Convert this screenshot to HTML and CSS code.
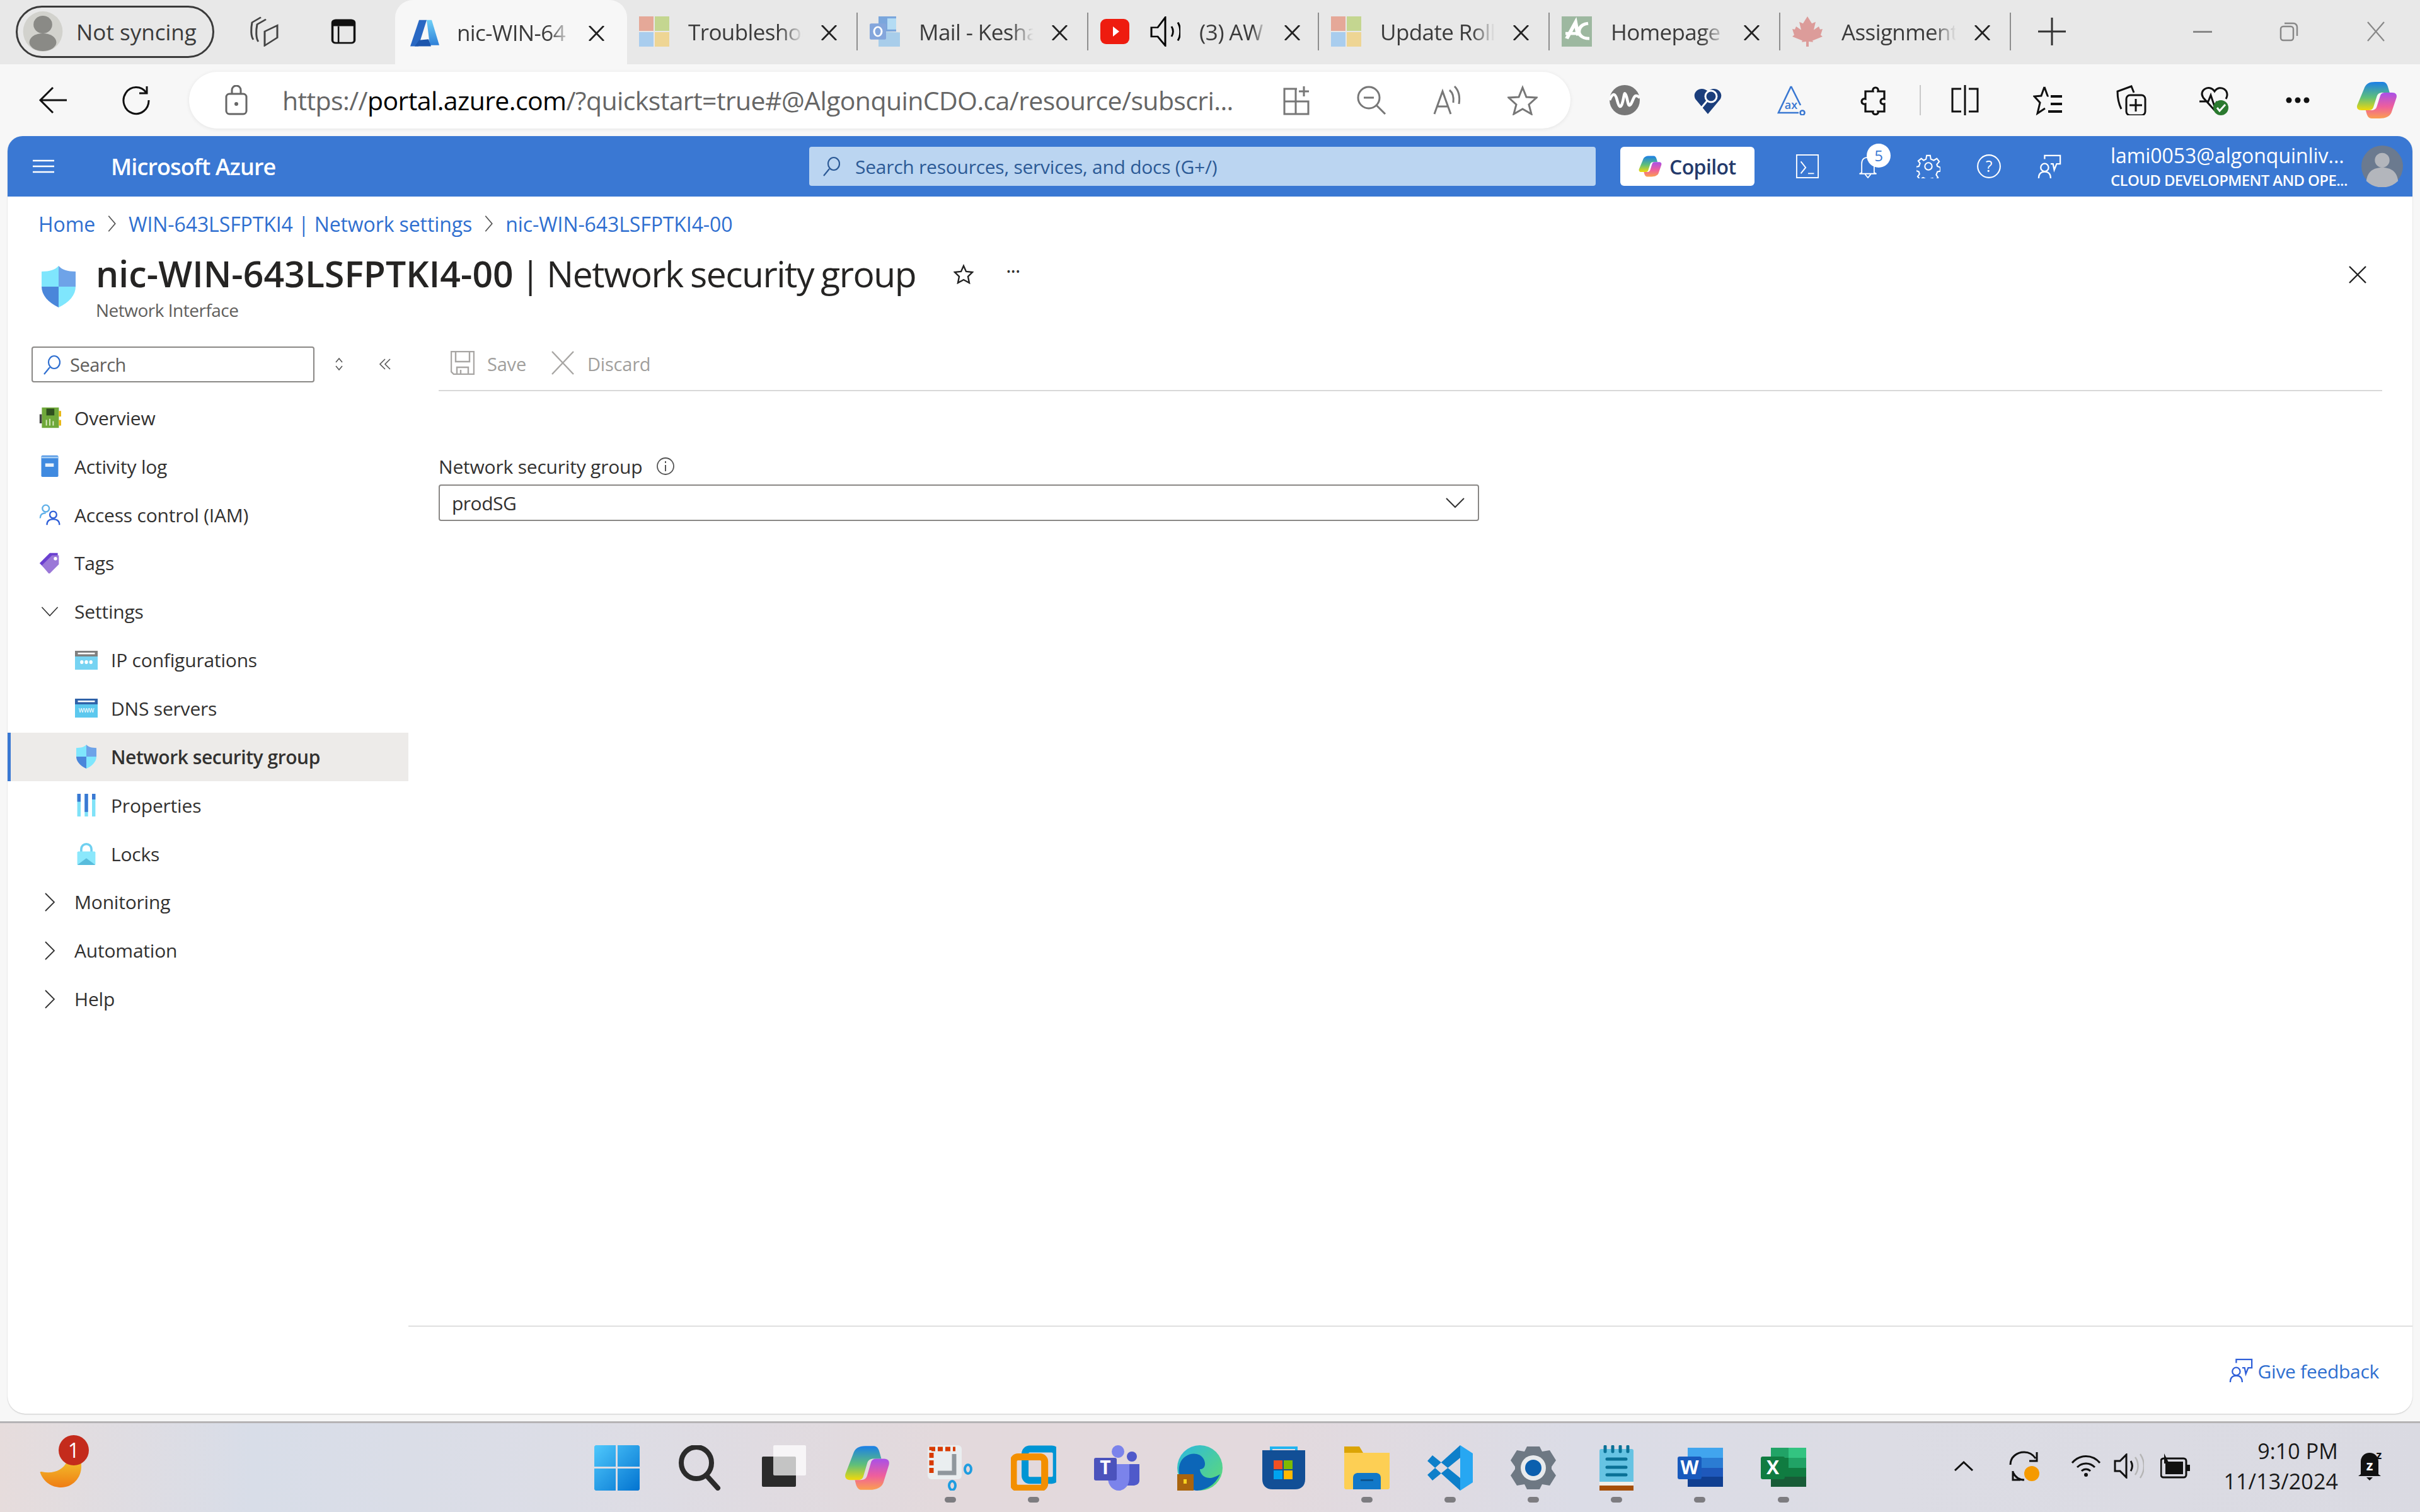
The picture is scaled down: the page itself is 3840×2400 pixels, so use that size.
FILE: index.html
```html
<!DOCTYPE html>
<html lang="en">
<head>
  <meta charset="UTF-8">
  <meta name="viewport" content="width=device-width, initial-scale=1.0">
  <title>nic-WIN-643LSFPTKI4-00 | Network security group</title>
  <link rel="stylesheet" href="styles.css">
</head>
<body>
  <svg class="defs" width="0" height="0">
    <defs>
      <linearGradient id="gLeft" x1="0" y1="0" x2="0" y2="1"><stop offset="0" stop-color="#1b7fe8"/><stop offset=".55" stop-color="#5fbf7a"/><stop offset="1" stop-color="#f2d90a"/></linearGradient>
      <linearGradient id="gRight" x1="0" y1="0" x2="0" y2="1"><stop offset="0" stop-color="#a850e8"/><stop offset=".55" stop-color="#ef5f9c"/><stop offset="1" stop-color="#fb9f50"/></linearGradient>
      <linearGradient id="gAzure" x1="0" y1="0" x2="0" y2="1"><stop offset="0" stop-color="#6fd0f7"/><stop offset="1" stop-color="#2f80d8"/></linearGradient>
      <linearGradient id="gStart" x1="0" y1="0" x2="1" y2="1"><stop offset="0" stop-color="#4fc8fc"/><stop offset="1" stop-color="#0273d0"/></linearGradient>
      <linearGradient id="gEdge" x1="0" y1="0" x2="1" y2="1"><stop offset="0" stop-color="#2bb8e0"/><stop offset="1" stop-color="#62dc70"/></linearGradient>
      <linearGradient id="gMoon" x1="0" y1="0" x2="0" y2="1"><stop offset="0" stop-color="#f2bb2a"/><stop offset="1" stop-color="#ef7d14"/></linearGradient>
      <symbol id="copilot" viewBox="0 0 48 60" preserveAspectRatio="none">
        <path fill="url(#gLeft)" d="M22 1h9c3 0 5 3 6 8l2 9h-8c-4 0-6 2-7 6l-4 17c-1 4-3 5-6 5H6c-4 0-6-3-5-8L9 12C11 4 15 1 22 1z"/>
        <path fill="url(#gRight)" d="M27 59h-9c-3 0-5-3-6-8l-1-5h6c4 0 6-2 7-6l4-17c1-4 3-5 6-5h8c4 0 6 3 5 8l-6 24c-2 6-7 9-14 9z"/>
      </symbol>
      <symbol id="msfav" viewBox="0 0 48 48">
        <rect width="23" height="23" fill="#e5a898"/><rect x="25" width="23" height="23" fill="#c4d690"/>
        <rect y="25" width="23" height="23" fill="#a9cdee"/><rect x="25" y="25" width="23" height="23" fill="#eed594"/>
      </symbol>
      <symbol id="shield" viewBox="0 0 54 66" preserveAspectRatio="none">
        <path fill="#6ea3e8" d="M27 0c5 6 14 9 27 9v24H27z"/><path fill="#7fe6fd" d="M27 0C22 6 13 9 0 9v24h27z"/>
        <path fill="#4a86da" d="M0 33h27v33C10 58 0 46 0 33z"/><path fill="#7fe6fd" d="M54 33H27v33c17-8 27-20 27-33z"/>
      </symbol>
      <symbol id="feedback" viewBox="0 0 40 40">
        <g fill="none" stroke="currentColor" stroke-width="2.4"><path d="M12 8V2h26v14h-6l-4 10-2-10h-4"/><circle cx="12" cy="22" r="6.5"/><path d="M2 40c0-8 4-11 10-11s10 3 10 11"/></g>
      </symbol>
      <symbol id="chev" viewBox="0 0 16 32"><path fill="none" stroke="currentColor" stroke-width="2" d="M2 2l12 14L2 30"/></symbol>
      <symbol id="tabx" viewBox="0 0 25 24"><path stroke="#222" stroke-width="2.8" d="M1 0l23 24M24 0L1 24"/></symbol>
    </defs>
  </svg>

  <div class="tabstrip">
    <div class="profile">
      <svg class="profile-pic" viewBox="0 0 40 66" preserveAspectRatio="none"><ellipse cx="20" cy="33" rx="19" ry="32" fill="#d2d2cd"/><ellipse cx="20" cy="22" rx="9" ry="14" fill="#8a8a86"/><ellipse cx="20" cy="50" rx="13" ry="14" fill="#8a8a86"/></svg>
      <span>Not syncing</span>
    </div>
    <svg class="strip-btn" viewBox="0 0 48 60" preserveAspectRatio="none"><g fill="none" stroke="#444" stroke-width="3"><path d="M6 46C2 40 2 24 4 12L18 2"/><path d="M14 50C10 44 10 28 12 16L26 6"/><path d="M24 58l20-16V18L24 30z"/></g></svg>
    <svg class="strip-btn vertical" viewBox="0 0 48 60" preserveAspectRatio="none"><rect x="4" y="4" width="40" height="52" rx="6" fill="none" stroke="#111" stroke-width="4"/><path fill="#111" d="M4 10a6 6 0 0 1 6-6h28a6 6 0 0 1 6 6v8H4z"/><path stroke="#111" stroke-width="3" d="M15 18v38"/></svg>

    <div class="tab active">
      <svg class="fav" viewBox="0 0 48 60" preserveAspectRatio="none"><path fill="#2968c3" d="M15 6h12L14 58H1z"/><path fill="url(#gAzure)" d="M27 6h8l12 50H32z"/><path fill="#1d56ad" d="M15 46l15-2 4 14H8z"/></svg>
      <span class="tab-title">nic-WIN-64</span><svg class="tab-x"><use href="#tabx"/></svg>
    </div>
    <div class="tab">
      <svg class="fav"><use href="#msfav"/></svg>
      <span class="tab-title">Troubleshoo</span><svg class="tab-x"><use href="#tabx"/></svg>
    </div>
    <div class="tab">
      <svg class="fav" viewBox="0 0 48 60" preserveAspectRatio="none"><path fill="#7aa6dc" d="M14 0h28v30H14z"/><path fill="#b4dcf4" d="M28 4h14v22H28z"/><path fill="#a8cdea" d="M14 30l34 2v28H14z"/><rect y="14" width="26" height="32" rx="3" fill="#84a6dc"/><ellipse cx="13" cy="30" rx="6" ry="9" fill="none" stroke="#fff" stroke-width="3"/></svg>
      <span class="tab-title">Mail - Kesha</span><svg class="tab-x"><use href="#tabx"/></svg>
    </div>
    <div class="tab">
      <svg class="fav" viewBox="0 0 48 48"><rect y="4" width="46" height="40" rx="9" fill="#ee1c0f"/><path fill="#fff" d="M20 16l10 8-10 8z"/></svg>
      <svg class="fav spk" viewBox="0 0 48 60" preserveAspectRatio="none"><g fill="none" stroke="#000" stroke-width="3"><path d="M2 22h10L24 2v56L12 40H2z"/><path d="M34 20c3 6 3 14 0 20"/><path d="M44 12c5 10 5 26 0 36"/></g></svg>
      <span class="tab-title short">(3) AW</span><svg class="tab-x"><use href="#tabx"/></svg>
    </div>
    <div class="tab">
      <svg class="fav"><use href="#msfav"/></svg>
      <span class="tab-title">Update Roll</span><svg class="tab-x"><use href="#tabx"/></svg>
    </div>
    <div class="tab">
      <svg class="fav" viewBox="0 0 48 60" preserveAspectRatio="none"><rect width="48" height="60" fill="#9db8a0"/><path fill="none" stroke="#fff" stroke-width="6" d="M8 44L22 12l4 26M42 14C28 16 24 30 30 38c3 4 8 6 14 6M6 34h22"/></svg>
      <span class="tab-title">Homepage</span><svg class="tab-x"><use href="#tabx"/></svg>
    </div>
    <div class="tab">
      <svg class="fav" viewBox="0 0 48 60" preserveAspectRatio="none"><path fill="#dc9c9a" d="M24 0l7 14 6-3-3 16 8-7 2 6 4-1-3 12 3 3-16 8 1 3-7-1v10h-4V50l-7 1 1-3L0 40l3-3-3-12 4 1 2-6 8 7-3-16 6 3z"/></svg>
      <span class="tab-title">Assignment</span><svg class="tab-x"><use href="#tabx"/></svg>
    </div>
    <svg class="newtab" viewBox="0 0 44 44"><path stroke="#333" stroke-width="3" d="M22 0v44M0 22h44"/></svg>
    <div class="winctl">
      <span class="win-min"></span>
      <svg class="win-res" viewBox="0 0 30 32"><g fill="none" stroke="#888" stroke-width="2.5"><rect x="2" y="8" width="20" height="22" rx="4"/><path d="M8 3h14a6 6 0 0 1 6 6v14"/></g></svg>
      <svg class="win-close" viewBox="0 0 30 32"><path stroke="#888" stroke-width="2.2" d="M2 1l26 30M28 1L2 31"/></svg>
    </div>
  </div>

  <div class="toolbar">
    <span class="tool-cell"><svg class="ico" viewBox="0 0 48 48"><path fill="none" stroke="#111" stroke-width="3" d="M24 4L4 24l20 20M4 24h42"/></svg></span>
    <span class="tool-cell"><svg class="ico" viewBox="0 0 48 48"><path fill="none" stroke="#111" stroke-width="3" d="M40 12A20 21 0 1 0 44 24M41 2v11H29"/></svg></span>
    <div class="addressbar">
      <svg class="lock" viewBox="0 0 36 48"><g fill="none" stroke="#666" stroke-width="3"><rect x="2" y="14" width="32" height="32" rx="5"/><path d="M11 14V8a7 7 0 0 1 14 0v6"/></g><circle cx="18" cy="30" r="3" fill="#666"/></svg>
      <span class="url">https://<b>portal.azure.com</b>/?quickstart=true#@AlgonquinCDO.ca/resource/subscri...</span>
      <span class="addr-btns">
        <svg class="ico" viewBox="0 0 48 48"><g fill="none" stroke="#777" stroke-width="3"><path d="M26 6H6v40h38V26H6M24 6v40"/><path d="M37 2v16M29 10h16"/></g></svg>
        <svg class="ico" viewBox="0 0 48 48"><g fill="none" stroke="#777" stroke-width="3"><circle cx="20" cy="20" r="17"/><path d="M32 32l14 14M12 20h16"/></g></svg>
        <svg class="ico" viewBox="0 0 48 48"><g fill="none" stroke="#777" stroke-width="3"><path d="M4 46L17 10l13 36M9 34h16"/><path d="M28 8c5 4 7 12 6 20M36 2c6 6 9 16 7 28"/></g></svg>
        <svg class="ico" viewBox="0 0 48 48"><path fill="none" stroke="#777" stroke-width="3" d="M24 4l6 15 16 1-12 11 4 15-14-8-14 8 4-15L2 20l16-1z"/></svg>
      </span>
    </div>
    <div class="ext-btns">
      <span class="tool-cell"><svg class="ico" viewBox="0 0 48 48"><circle cx="24" cy="24" r="24" fill="#777"/><path fill="none" stroke="#fff" stroke-width="4.5" d="M0 24c5-12 9-12 12 0s6 14 9 2 2-16 5-10 3 22 8 14 4-18 14-10"/></svg></span>
      <span class="tool-cell"><svg class="ico" viewBox="0 0 48 48"><path fill="#1b3e7c" d="M24 46L4 22C-2 10 14 0 24 10c10-10 26 0 20 12z"/><circle cx="29" cy="18" r="9" fill="none" stroke="#fff" stroke-width="3"/><path stroke="#fff" stroke-width="3" d="M23 25L13 37"/></svg></span>
      <span class="tool-cell"><svg class="ico" viewBox="0 0 48 48"><g fill="none" stroke="#3a78d2" stroke-width="2.6"><path d="M24 2L4 44h32M24 2l15 30"/><circle cx="42" cy="44" r="3.5"/></g><text class="ax" x="24" y="38">ax</text></svg></span>
      <span class="tool-cell"><svg class="ico" viewBox="0 0 48 48"><path fill="none" stroke="#111" stroke-width="3.2" d="M16 10h6c-2-8 10-8 8 0h10v12c-8-2-8 10 0 8v12H30c2 6-10 6-8 0H10V30c-8 2-8-10 0-8V10z"/></svg></span>
      <span class="tool-div"></span>
      <span class="tool-cell"><svg class="ico" viewBox="0 0 48 48"><g fill="none" stroke="#111" stroke-width="3"><path d="M18 6H4v36h14M30 6h14v36H30M24 0v48"/></g></svg></span>
      <span class="tool-cell"><svg class="ico" viewBox="0 0 48 48"><g fill="none" stroke="#111" stroke-width="3"><path d="M18 3l5 14h-1M18 3l-5 14-11 1 9 10-4 17 12-8"/></g><path stroke="#111" stroke-width="4" d="M28 18h18M28 30h18M24 42h22" /></svg></span>
      <span class="tool-cell"><svg class="ico" viewBox="0 0 48 48"><g fill="none" stroke="#111" stroke-width="3"><path d="M8 38C4 30 2 20 2 10l22-8 4 10"/><rect x="16" y="16" width="30" height="32" rx="6"/><path d="M31 22v20M21 32h20"/></g></svg></span>
      <span class="tool-cell"><svg class="ico" viewBox="0 0 48 48"><path fill="none" stroke="#111" stroke-width="3" d="M24 40L6 20C-2 8 16-2 24 10c8-12 26-2 18 12M0 26h14l4-10 6 18 4-8"/><circle cx="34" cy="36" r="12" fill="#2b7a2f"/><path fill="none" stroke="#fff" stroke-width="3" d="M28 36l4 5 9-10"/></svg></span>
      <span class="tool-cell"><svg class="more-ico" viewBox="0 0 38 10"><circle cx="5" cy="5" r="4.5" fill="#111"/><circle cx="19" cy="5" r="4.5" fill="#111"/><circle cx="33" cy="5" r="4.5" fill="#111"/></svg></span>
      <span class="tool-cell copilot-cell"><svg class="copilot-big"><use href="#copilot"/></svg></span>
    </div>
  </div>

  <div class="portal-wrap">
    <div class="portal">
      <header class="topbar">
        <span class="menu-cell"><svg class="hamburger" viewBox="0 0 34 22"><path stroke="#fff" stroke-width="2.4" d="M0 2h34M0 11h34M0 20h34"/></svg></span>
        <span class="brand">Microsoft Azure</span>
        <div class="globalsearch">
          <svg class="mag" viewBox="0 0 28 32"><g fill="none" stroke="#2c5a96" stroke-width="2.2"><ellipse cx="18" cy="12" rx="9" ry="10"/><path d="M11 20L2 31"/></g></svg>
          <span>Search resources, services, and docs (G+/)</span>
        </div>
        <div class="copilot-btn"><svg class="copilot-sm"><use href="#copilot"/></svg><span>Copilot</span></div>
        <div class="top-icons">
          <span class="top-cell"><svg class="top-ico" viewBox="0 0 38 40"><rect x="1" y="1" width="36" height="38" fill="none" stroke="#fff" stroke-width="2"/><path fill="none" stroke="#fff" stroke-width="2" d="M8 12l8 10-8 10M20 32h10"/></svg></span>
          <span class="top-cell bell">
            <svg class="top-ico" viewBox="0 0 38 40"><path fill="none" stroke="#fff" stroke-width="2" d="M8 30V14C8 7 12 3 19 3s11 4 11 11v16l4 2H4zM14 33l5 6 5-6"/></svg>
            <span class="badge">5</span>
          </span>
          <span class="top-cell"><svg class="top-ico" viewBox="0 0 40 40"><g fill="none" stroke="#fff" stroke-width="2.2"><circle cx="20" cy="20" r="6"/><path d="M17 2h6l1 6 5 2 5-3 4 5-4 5 1 3 5 2v6l-5 1-2 5 3 5-5 4-4-3-4 1-1 5h-6l-1-5-4-2-5 3-4-5 3-4-1-4-5-2v-6l5-1 2-5-3-4 5-4 4 3 4-2z"/></g></svg></span>
          <span class="top-cell"><svg class="top-ico" viewBox="0 0 40 40"><circle cx="20" cy="20" r="18.8" fill="none" stroke="#fff" stroke-width="2.2"/><text class="q" x="20" y="29">?</text></svg></span>
          <span class="top-cell"><svg class="top-ico white"><use href="#feedback"/></svg></span>
        </div>
        <div class="user">
          <span class="user-mail">lami0053@algonquinliv...</span>
          <span class="user-org">CLOUD DEVELOPMENT AND OPE...</span>
        </div>
        <svg class="avatar" viewBox="0 0 68 68"><circle cx="34" cy="34" r="34" fill="#6b7a8f"/><circle cx="34" cy="24" r="12" fill="#b3b6bc"/><path fill="#b3b6bc" d="M8 58c2-16 12-22 26-22s24 6 26 22c-14 14-38 14-52 0z"/></svg>
      </header>

      <nav class="crumbs">
        <a>Home</a><svg class="crumb-sep"><use href="#chev"/></svg>
        <a>WIN-643LSFPTKI4 | Network settings</a><svg class="crumb-sep"><use href="#chev"/></svg>
        <a>nic-WIN-643LSFPTKI4-00</a>
      </nav>

      <div class="blade-head">
        <svg class="blade-shield"><use href="#shield"/></svg>
        <div class="blade-titles">
          <h1><b>nic-WIN-643LSFPTKI4-00</b> | Network security group</h1>
          <p>Network Interface</p>
        </div>
        <svg class="pin" viewBox="0 0 32 32"><path fill="none" stroke="#222" stroke-width="2.4" d="M16 3l4 9 10 1-7 7 2 10-9-5-9 5 2-10-7-7 10-1z"/></svg>
        <span class="more">···</span>
        <svg class="blade-close" viewBox="0 0 30 30"><path stroke="#222" stroke-width="2.4" d="M2 2l26 26M28 2L2 28"/></svg>
      </div>

      <div class="blade-body">
        <aside class="sidebar">
          <div class="side-tools">
            <div class="side-search">
              <svg class="mag" viewBox="0 0 28 32"><g fill="none" stroke="#2f6fd0" stroke-width="2.2"><ellipse cx="18" cy="12" rx="9" ry="10"/><path d="M11 20L2 31"/></g></svg>
              <span>Search</span>
            </div>
            <svg class="sort-ico" viewBox="0 0 16 20"><path fill="none" stroke="#555" stroke-width="1.6" d="M3 7l5-6 5 6M3 13l5 6 5-6"/></svg>
            <svg class="collapse-ico" viewBox="0 0 20 20"><path fill="none" stroke="#555" stroke-width="1.6" d="M10 2l-8 8 8 8M18 2l-8 8 8 8"/></svg>
          </div>
          <ul class="side-list">
            <li class="side-row">
              <svg class="side-ico" viewBox="0 0 40 40"><rect x="6" y="2" width="30" height="36" fill="#6fa83a"/><rect x="14" y="4" width="14" height="12" fill="#2f4f1f"/><rect x="36" y="8" width="4" height="10" fill="#e8b818"/><rect x="36" y="24" width="4" height="10" fill="#e8b818"/><rect x="2" y="14" width="4" height="16" fill="#444"/><path stroke="#dfeec8" stroke-width="2" d="M14 24v10M20 22v12M26 26v8"/></svg>
              <span>Overview</span>
            </li>
            <li class="side-row">
              <svg class="side-ico" viewBox="0 0 40 40"><rect x="5" y="1" width="30" height="38" rx="2" fill="#3f8ae0"/><path fill="#a9d0f5" d="M5 3h30v3H5z"/><rect x="12" y="15" width="15" height="6" fill="#e8f2fc"/></svg>
              <span>Activity log</span>
            </li>
            <li class="side-row">
              <svg class="side-ico" viewBox="0 0 40 40"><g fill="none" stroke-width="2.6"><circle cx="13" cy="9" r="6" stroke="#5fb0e8"/><path d="M3 26c0-6 4-9 10-9" stroke="#5fb0e8"/><circle cx="26" cy="20" r="6" stroke="#2f5fd8"/><path d="M15 38c0-7 4-10 11-10s11 3 11 10" stroke="#2f5fd8"/></g></svg>
              <span>Access control (IAM)</span>
            </li>
            <li class="side-row">
              <svg class="side-ico" viewBox="0 0 40 40"><path fill="#6a3fd0" d="M2 20L20 2h14v8L12 30z"/><path fill="#9b78d8" d="M6 24L24 6h12v16L20 38h-2z"/><circle cx="30" cy="12" r="3" fill="#fff"/></svg>
              <span>Tags</span>
            </li>
            <li class="side-row">
              <svg class="side-chev open" viewBox="0 0 32 20"><path fill="none" stroke="#333" stroke-width="1.8" d="M2 2l14 15L30 2"/></svg>
              <span>Settings</span>
            </li>
            <li class="side-row sub">
              <svg class="side-ico wide" viewBox="0 0 40 30" preserveAspectRatio="none"><rect width="40" height="30" fill="#76d3f2"/><rect width="40" height="9" fill="#7f7f7f"/><rect x="5" y="3" width="30" height="2.5" fill="#fff"/><circle cx="12" cy="18" r="3" fill="#fff"/><circle cx="20" cy="18" r="3" fill="#fff"/><circle cx="28" cy="18" r="3" fill="#fff"/></svg>
              <span>IP configurations</span>
            </li>
            <li class="side-row sub">
              <svg class="side-ico wide" viewBox="0 0 40 30" preserveAspectRatio="none"><rect width="40" height="30" fill="#5cc8ee"/><rect width="40" height="9" fill="#2f62a8"/><rect x="5" y="3" width="30" height="2.5" fill="#fff"/><text class="www" x="20" y="22">www</text></svg>
              <span>DNS servers</span>
            </li>
            <li class="side-row sub current">
              <svg class="side-ico shield-sm"><use href="#shield"/></svg>
              <span>Network security group</span>
            </li>
            <li class="side-row sub">
              <svg class="side-ico" viewBox="0 0 40 40"><rect x="4" y="0" width="6" height="40" fill="#7fe2f8"/><rect x="4" y="0" width="6" height="14" fill="#3a78d2"/><rect x="17" y="0" width="6" height="40" fill="#7fe2f8"/><rect x="17" y="0" width="6" height="32" fill="#3a78d2"/><rect x="30" y="0" width="6" height="40" fill="#7fe2f8"/><rect x="30" y="0" width="6" height="10" fill="#3a78d2"/></svg>
              <span>Properties</span>
            </li>
            <li class="side-row sub">
              <svg class="side-ico" viewBox="0 0 40 40"><path fill="none" stroke="#6fd0f0" stroke-width="4" d="M11 18V12a9 9 0 0 1 18 0v6"/><rect x="4" y="16" width="32" height="24" rx="2" fill="#8be8fc"/><path fill="#58bcdc" d="M4 40l16-12 16 12z"/></svg>
              <span>Locks</span>
            </li>
            <li class="side-row">
              <svg class="side-chev" viewBox="0 0 20 32"><path fill="none" stroke="#333" stroke-width="1.8" d="M3 2l14 14L3 30"/></svg>
              <span>Monitoring</span>
            </li>
            <li class="side-row">
              <svg class="side-chev" viewBox="0 0 20 32"><path fill="none" stroke="#333" stroke-width="1.8" d="M3 2l14 14L3 30"/></svg>
              <span>Automation</span>
            </li>
            <li class="side-row">
              <svg class="side-chev" viewBox="0 0 20 32"><path fill="none" stroke="#333" stroke-width="1.8" d="M3 2l14 14L3 30"/></svg>
              <span>Help</span>
            </li>
          </ul>
        </aside>

        <main class="main">
          <div class="main-inner">
            <div class="commands">
              <svg class="cmd-ico" viewBox="0 0 38 38"><g fill="none" stroke="#a8a6a4" stroke-width="2.4"><path d="M1 1h36v36H5l-4-4z"/><path d="M8 1v16h22V1M10 37V26h18v11M16 30v7"/></g></svg>
              <span class="cmd-text">Save</span>
              <svg class="cmd-ico discard" viewBox="0 0 38 38"><path stroke="#a8a6a4" stroke-width="2.4" d="M2 1l34 36M36 1L2 37"/></svg>
              <span class="cmd-text">Discard</span>
            </div>
            <div class="field">
              <label class="field-label">Network security group
                <svg class="info" viewBox="0 0 30 30"><circle cx="15" cy="15" r="13" fill="none" stroke="#555" stroke-width="1.8"/><path stroke="#555" stroke-width="2" d="M15 13v10M15 7v3"/></svg>
              </label>
              <div class="select">
                <span>prodSG</span>
                <svg class="select-chev" viewBox="0 0 30 18"><path fill="none" stroke="#333" stroke-width="2" d="M1 2l14 14L29 2"/></svg>
              </div>
            </div>
          </div>
          <footer class="main-foot">
            <svg class="foot-ico"><use href="#feedback"/></svg>
            <span>Give feedback</span>
          </footer>
        </main>
      </div>
    </div>
  </div>

  <div class="taskbar">
    <div class="task-left">
      <div class="widget">
        <svg class="moon" viewBox="0 0 66 41"><path fill="url(#gMoon)" d="M1 18c-1-1 0-2 2-2 18 4 34-2 40-16h23c1 2 0 6 0 8 0 18-14 33-32 33C19 41 6 32 1 18z"/></svg>
        <span class="widget-badge">1</span>
      </div>
    </div>
    <div class="task-apps">
      <span class="app"><svg class="app-ico" viewBox="0 0 72 72"><path fill="url(#gStart)" d="M2 0h32v34H0V2zM37 0h33l2 2v32H37zM0 37h34v35H2l-2-2zM37 37h35v33l-2 2H37z"/></svg></span>
      <span class="app"><svg class="app-ico" viewBox="0 0 72 72"><ellipse cx="30" cy="28" rx="24" ry="25" fill="none" stroke="#2b2b2b" stroke-width="8"/><path stroke="#2b2b2b" stroke-width="8" stroke-linecap="round" d="M46 48l18 20"/></svg></span>
      <span class="app"><svg class="app-ico" viewBox="0 0 72 72"><rect x="2" y="18" width="54" height="48" rx="2" fill="#2b2b2b"/><rect x="20" y="0" width="52" height="48" rx="2" fill="#fff" fill-opacity=".72"/></svg></span>
      <span class="app"><svg class="app-ico"><use href="#copilot"/></svg></span>
      <span class="app on"><svg class="app-ico" viewBox="0 0 72 72"><rect x="0" y="0" width="54" height="54" rx="6" fill="#eaeef0"/><path fill="none" stroke="#d83b01" stroke-width="7" stroke-dasharray="8 4" d="M6 44V6h38"/><path fill="none" stroke="#8f979d" stroke-width="7" d="M42 14v30H16"/><ellipse cx="64" cy="38" rx="5" ry="7" fill="none" stroke="#1f9de0" stroke-width="4"/><ellipse cx="39" cy="64" rx="5" ry="7" fill="none" stroke="#1f9de0" stroke-width="4"/></svg></span>
      <span class="app on"><svg class="app-ico" viewBox="0 0 72 72"><rect x="18" y="0" width="54" height="54" rx="8" fill="none" stroke="#0095d4" stroke-width="12" transform="translate(6 6) scale(.92)"/><rect x="0" y="18" width="54" height="54" rx="8" fill="none" stroke="#f38f00" stroke-width="12" transform="translate(4 2) scale(.92)"/></svg></span>
      <span class="app"><svg class="app-ico" viewBox="0 0 72 72"><circle cx="38" cy="10" r="10" fill="#7b83eb"/><circle cx="60" cy="18" r="8" fill="#4f59ca"/><path fill="#4f59ca" d="M50 30h22v26c0 6-6 8-10 8H50z"/><path fill="#7b83eb" d="M22 30h34v22c0 12-8 20-17 20S22 64 22 52z"/><rect y="20" width="36" height="36" rx="3" fill="#4b53bc"/><text class="team-t" x="18" y="46">T</text></svg></span>
      <span class="app"><svg class="app-ico" viewBox="0 0 72 72"><circle cx="36" cy="36" r="36" fill="url(#gEdge)"/><path fill="#0c66b8" d="M4 30c6-18 30-22 38-8 4 8 2 16-6 16 0 8 10 22 32 8C60 64 44 72 30 72 12 70-2 50 4 30z"/><rect x="0" y="46" width="26" height="26" fill="#a9640e"/><rect x="10" y="54" width="5" height="7" fill="#f7d21f"/></svg></span>
      <span class="app"><svg class="app-ico" viewBox="0 0 72 72"><path fill="none" stroke="#21b4f0" stroke-width="4" d="M16 14V4h40v10"/><path fill="#124f96" d="M2 8h68v46c0 10-6 16-16 16H18C8 70 2 64 2 54z"/><rect x="20" y="24" width="14" height="14" fill="#f25022"/><rect x="36" y="24" width="14" height="14" fill="#7fba00"/><rect x="20" y="40" width="14" height="14" fill="#00a4ef"/><rect x="36" y="40" width="14" height="14" fill="#ffb900"/></svg></span>
      <span class="app on"><svg class="app-ico" viewBox="0 0 72 72"><path fill="#dba405" d="M0 2h24l6 10h-30z"/><path fill="#fdcf54" d="M0 12h72v56l-2 2H2l-2-2z"/><path fill="#1278c8" d="M14 70V52c0-6 4-8 8-8h28c4 0 8 2 8 8v18z"/><rect x="26" y="54" width="20" height="3" fill="#0b5490"/></svg></span>
      <span class="app on"><svg class="app-ico" viewBox="0 0 72 72"><path fill="#27a7f2" d="M52 0l20 13v46L52 72z"/><path fill="#0d7fca" d="M0 25L8 16 52 52V72zM0 47L8 56 52 20V0z"/></svg></span>
      <span class="app on"><svg class="app-ico" viewBox="0 0 72 72"><path fill="#6e7883" d="M26 2h20l4 8 12-2 10 16-7 10v4l7 10-10 16-12-2-4 8H26l-4-8-12 2L0 48l7-10v-4L0 24 10 8l12 2z"/><circle cx="36" cy="36" r="20" fill="#e8eaec"/><circle cx="36" cy="36" r="13" fill="#0b5fae"/></svg></span>
      <span class="app on"><svg class="app-ico narrow" viewBox="0 0 54 72"><rect y="6" width="54" height="54" rx="3" fill="#66c3e3"/><rect y="60" width="54" height="12" fill="#a64f08"/><rect y="58" width="54" height="6" fill="#f3efe8"/><path stroke="#0a7196" stroke-width="5" stroke-linecap="round" d="M9 2v8M21 2v8M33 2v8M45 2v8"/><path stroke="#0a7196" stroke-width="5" stroke-linecap="round" d="M12 22h30M12 35h30M12 47h30"/></svg></span>
      <span class="app on"><svg class="app-ico" viewBox="0 0 72 72"><rect x="16" y="4" width="56" height="62" rx="2" fill="#1e58bb"/><rect x="16" y="4" width="56" height="16" fill="#41a5ee"/><rect x="16" y="20" width="56" height="16" fill="#2b7cd3"/><rect x="16" y="50" width="56" height="16" fill="#103f91"/><rect y="18" width="38" height="36" rx="3" fill="#185abd"/><text class="task-letter" x="19" y="46">W</text></svg></span>
      <span class="app on"><svg class="app-ico" viewBox="0 0 72 72"><rect x="16" y="4" width="56" height="62" rx="2" fill="#107c41"/><rect x="16" y="4" width="28" height="16" fill="#21a366"/><rect x="44" y="4" width="28" height="16" fill="#33c481"/><rect x="44" y="20" width="28" height="16" fill="#21a366"/><rect x="16" y="50" width="56" height="16" fill="#185c37"/><rect y="18" width="38" height="36" rx="3" fill="#107c41"/><text class="task-letter" x="19" y="46">X</text></svg></span>
    </div>
    <div class="tray">
      <svg class="tray-caret" viewBox="0 0 32 16"><path fill="none" stroke="#111" stroke-width="3" d="M2 15L16 2l14 13"/></svg>
      <span class="tray-sync">
        <svg class="tray-ico" viewBox="0 0 48 48"><path fill="none" stroke="#111" stroke-width="3" d="M2 22C2 10 12 2 24 2c8 0 14 4 18 10M44 2v14H32M6 32v14h12M6 34c4 8 10 12 18 12"/></svg>
        <span class="orange-dot"></span>
      </span>
      <svg class="tray-wifi" viewBox="0 0 48 34"><g fill="none" stroke="#111" stroke-width="3"><path d="M2 12c12-14 32-14 44 0M10 19c8-8 20-8 28 0M17 25c4-4 10-4 14 0"/></g><circle cx="24" cy="31" r="3" fill="#111"/></svg>
      <svg class="tray-spk" viewBox="0 0 48 40"><path fill="none" stroke="#111" stroke-width="3" d="M2 12h8L20 2v36L10 28H2zM27 12c3 5 3 11 0 16"/><path fill="none" stroke="#b5b5b5" stroke-width="2.4" d="M34 6c6 8 6 20 0 28M42 1c8 12 8 26 0 38"/></svg>
      <svg class="tray-bat" viewBox="0 0 48 40"><rect x="1" y="8" width="40" height="30" rx="4" fill="none" stroke="#111" stroke-width="3"/><rect x="8" y="13" width="28" height="20" fill="#111"/><rect x="42" y="18" width="5" height="10" fill="#111"/><path fill="#111" d="M6 0v16h8z"/></svg>
      <div class="clock"><span>9:10 PM</span><span>11/13/2024</span></div>
      <svg class="tray-bell" viewBox="0 0 40 46"><path fill="#111" d="M4 36V16C4 8 10 2 18 2s14 6 14 14v20l4 3H0z"/><path fill="#111" d="M13 41h10l-5 5z"/><text class="zz" x="18" y="30">z</text><text class="zz small" x="33" y="12">z</text></svg>
    </div>
  </div>
</body>
</html>
```

FILE: styles.css
```css
* {
  box-sizing: border-box;
}

body {
  margin: 0;
  width: 3840px;
  height: 2400px;
  overflow: hidden;
  display: flex;
  flex-direction: column;
  font-family: "Open Sans", "Noto Sans", sans-serif;
  background-color: #f7f7f7;
  color: #323130;
}

svg {
  display: block;
  flex: none;
}

/* browser tabs */
.tabstrip {
  height: 102px;
  flex: none;
  display: flex;
  align-items: center;
  background-color: #e8e8e8;
  padding-left: 25px;
  padding-bottom: 2px;
  font-size: 35px;
  letter-spacing: -0.6px;
  color: #3b3b3b;
}

.profile {
  width: 315px;
  height: 83px;
  display: flex;
  align-items: center;
  gap: 20px;
  padding-left: 7px;
  border: 3px solid #3a3a3a;
  border-radius: 42px;
  letter-spacing: 0;
}

.profile-pic {
  width: 66px;
  height: 66px;
}

.strip-btn {
  width: 48px;
  height: 48px;
  margin-left: 56px;
}

.strip-btn.vertical {
  width: 42px;
  height: 42px;
  margin-left: 80px;
}

.tab {
  width: 366px;
  height: 60px;
  display: flex;
  align-items: center;
  padding-left: 19px;
  border-right: 2px solid #8e8e8e;
  flex: none;
}

.tab.active {
  width: 368px;
  height: 102px;
  margin-left: 61px;
  margin-bottom: -2px;
  padding-left: 23px;
  background-color: #f7f7f7;
  border-right: none;
  border-radius: 28px 28px 0 0;
}

.tab.active .tab-title {
  margin-left: 27px;
}

.tab.active .tab-x {
  margin-left: 27px;
}

.fav {
  width: 48px;
  height: 48px;
}

.fav.spk {
  margin-left: 31px;
}

.tab-title {
  width: 182px;
  margin-left: 30px;
  white-space: nowrap;
  overflow: hidden;
  -webkit-mask-image: linear-gradient(to right, #000 80%, transparent 100%);
  mask-image: linear-gradient(to right, #000 80%, transparent 100%);
}

.tab-title.short {
  width: 106px;
}

.tab-x {
  width: 25px;
  height: 24px;
  margin-left: 29px;
  margin-top: 4px;
}

.newtab {
  width: 44px;
  height: 44px;
  margin-left: 43px;
}

.winctl {
  display: flex;
  align-items: center;
  margin-left: auto;
}

.win-min {
  width: 30px;
  height: 3px;
  background-color: #888;
  margin-right: 107px;
}

.win-res {
  width: 30px;
  height: 32px;
  margin-right: 108px;
}

.win-close {
  width: 30px;
  height: 32px;
  margin-right: 55px;
}

/* address row */
.toolbar {
  height: 114px;
  flex: none;
  display: flex;
  align-items: center;
  padding-left: 18px;
  background-color: #f7f7f7;
}

.tool-cell {
  width: 132px;
  display: flex;
  justify-content: center;
  align-items: center;
  flex: none;
}

.ico {
  width: 48px;
  height: 48px;
}

.addressbar {
  width: 2192px;
  height: 90px;
  margin-left: 18px;
  display: flex;
  align-items: center;
  padding-left: 57px;
  background-color: #fff;
  border-radius: 45px;
  box-shadow: 0 1px 6px rgba(0, 0, 0, 0.08);
}

.lock {
  width: 36px;
  height: 48px;
}

.url {
  margin-left: 55px;
  width: 1526px;
  font-size: 41px;
  letter-spacing: -0.6px;
  white-space: nowrap;
  color: #666;
}

.url b {
  font-weight: 400;
  color: #000;
}

.addr-btns {
  display: flex;
  gap: 72px;
  margin-left: 58px;
}

.ext-btns {
  display: flex;
  align-items: center;
  margin-left: 20px;
}

.tool-div {
  width: 2px;
  height: 48px;
  margin: 0 4px 0 6px;
  background-color: #c9c9c9;
}

.more-ico {
  width: 38px;
  height: 10px;
}

.copilot-cell {
  width: 118px;
}

.copilot-big {
  width: 65px;
  height: 60px;
}

/* portal */
.portal-wrap {
  flex: 1;
  display: flex;
  padding: 0 12px 12px;
  min-height: 0;
}

.portal {
  flex: 1;
  display: flex;
  flex-direction: column;
  background-color: #fff;
  border-radius: 24px 24px 28px 28px;
  box-shadow: 0 1px 2px rgba(0, 0, 0, 0.2);
  overflow: hidden;
}

.topbar {
  height: 96px;
  flex: none;
  display: flex;
  align-items: center;
  background-color: #3a78d3;
  color: #fff;
}

.menu-cell {
  width: 164px;
  padding-left: 40px;
}

.hamburger {
  width: 34px;
  height: 22px;
}

.brand {
  width: 1108px;
  font-size: 36px;
  font-weight: 600;
  letter-spacing: -0.9px;
}

.globalsearch {
  width: 1248px;
  height: 62px;
  display: flex;
  align-items: center;
  gap: 24px;
  padding-left: 21px;
  background-color: #bbd5f1;
  border-radius: 4px;
  font-size: 30px;
  letter-spacing: -0.25px;
  color: #2c5a96;
}

.mag {
  width: 28px;
  height: 32px;
}

.copilot-btn {
  width: 213px;
  height: 62px;
  margin-left: 39px;
  display: flex;
  align-items: center;
  gap: 12px;
  padding-left: 29px;
  background-color: #fff;
  border-radius: 6px;
  font-size: 32px;
  font-weight: 600;
  letter-spacing: -0.6px;
  color: #243a6b;
}

.copilot-sm {
  width: 37px;
  height: 34px;
}

.top-icons {
  display: flex;
  margin-left: 36px;
}

.top-cell {
  width: 96px;
  display: flex;
  justify-content: center;
  position: relative;
}

.top-ico {
  width: 38px;
  height: 38px;
}

.top-ico.white {
  color: #fff;
}

.bell .top-ico {
  width: 34px;
  height: 36px;
  margin-top: 2px;
}

.badge {
  position: absolute;
  top: -17px;
  left: 46px;
  width: 38px;
  height: 38px;
  border-radius: 50%;
  background-color: #fff;
  color: #3a78d3;
  font-size: 24px;
  line-height: 38px;
  text-align: center;
}

.q {
  font-size: 26px;
  fill: #fff;
  text-anchor: middle;
}

.user {
  width: 398px;
  margin-left: 49px;
  display: flex;
  flex-direction: column;
  gap: 3px;
  white-space: nowrap;
}

.user-mail {
  font-size: 32px;
  letter-spacing: -0.05px;
  line-height: 40px;
}

.user-org {
  font-size: 24px;
  font-weight: 600;
  letter-spacing: -0.65px;
  line-height: 32px;
}

.avatar {
  width: 66px;
  height: 66px;
}

.crumbs {
  height: 86px;
  flex: none;
  display: flex;
  align-items: center;
  padding-left: 49px;
  font-size: 32px;
  letter-spacing: -0.1px;
  color: #2f6fd0;
}

.crumb-sep {
  width: 15px;
  height: 28px;
  margin: 0 19px;
  color: #555;
}

.blade-head {
  height: 132px;
  flex: none;
  display: flex;
  align-items: flex-start;
  padding-left: 54px;
}

.blade-shield {
  width: 54px;
  height: 66px;
  margin-top: 24px;
}

.blade-titles {
  margin-left: 32px;
  margin-top: -2px;
}

.blade-titles h1 {
  margin: 0;
  height: 76px;
  font-size: 57px;
  line-height: 76px;
  font-weight: 400;
  letter-spacing: -1.5px;
  word-spacing: -2px;
  white-space: nowrap;
  color: #252423;
}

.blade-titles h1 b {
  font-weight: 600;
  letter-spacing: 0.1px;
}

.blade-titles p {
  margin: 0;
  font-size: 28px;
  line-height: 40px;
  letter-spacing: -0.5px;
  color: #605e5c;
}

.pin {
  width: 32px;
  height: 32px;
  margin: 21px 0 0 60px;
}

.more {
  margin: 10px 0 0 51px;
  font-size: 32px;
  letter-spacing: -1px;
}

.blade-close {
  width: 30px;
  height: 30px;
  margin: 23px 72px 0 auto;
}

.blade-body {
  flex: 1;
  display: flex;
  min-height: 0;
}

.sidebar {
  width: 636px;
  flex: none;
}

.side-tools {
  height: 95px;
  display: flex;
  align-items: flex-start;
  padding: 20px 0 0 38px;
}

.side-search {
  width: 449px;
  height: 57px;
  display: flex;
  align-items: center;
  gap: 15px;
  padding-left: 16px;
  border: 2px solid #8a8886;
  border-radius: 4px;
  font-size: 29px;
  letter-spacing: -0.5px;
  color: #605e5c;
}

.sort-ico {
  width: 16px;
  height: 20px;
  margin: 18px 0 0 31px;
}

.collapse-ico {
  width: 20px;
  height: 20px;
  margin: 18px 0 0 55px;
}

.side-list {
  margin: 0;
  padding: 0;
  list-style: none;
}

.side-row {
  height: 76.85px;
  display: flex;
  align-items: center;
  font-size: 30px;
  letter-spacing: -0.2px;
  padding-left: 47px;
  color: #323130;
}

.side-row > span {
  margin-left: 19px;
}

.side-ico {
  width: 36px;
  height: 36px;
  margin: 0 2px;
}

.side-ico.wide {
  height: 30px;
}

.side-ico.shield-sm {
  width: 32px;
  height: 38px;
  margin: 0 4px;
}

.side-chev {
  width: 40px;
  height: 18px;
  padding: 0 4px;
}

.side-chev:not(.open) {
  height: 32px;
  padding: 0;
}

.side-row.sub {
  padding-left: 105px;
}

.side-row.current {
  background-color: #edebe9;
  border-left: 5px solid #3a78d3;
  padding-left: 100px;
  font-weight: 600;
  letter-spacing: -0.45px;
}

.www {
  font-size: 12px;
  fill: #fff;
  text-anchor: middle;
}

.ax {
  font-size: 18px;
  fill: #3a78d2;
  text-anchor: middle;
  font-weight: 600;
}

.main {
  flex: 1;
  display: flex;
  flex-direction: column;
  min-width: 0;
}

.main-inner {
  flex: 1;
  padding: 0 48px;
}

.commands {
  height: 91px;
  display: flex;
  align-items: center;
  padding: 6px 0 0 19px;
  border-bottom: 2px solid #d8d8d8;
  font-size: 29px;
  letter-spacing: -0.2px;
  color: #a19f9d;
}

.cmd-ico {
  width: 38px;
  height: 38px;
  margin-top: -3px;
}

.cmd-ico.discard {
  margin-left: 39px;
}

.cmd-text {
  margin-left: 20px;
}

.field {
  padding-top: 98px;
}

.field-label {
  height: 42px;
  display: flex;
  align-items: center;
  gap: 22px;
  font-size: 30px;
  letter-spacing: -0.2px;
}

.info {
  width: 30px;
  height: 30px;
}

.select {
  width: 1651px;
  height: 58px;
  margin-top: 8px;
  display: flex;
  align-items: center;
  justify-content: space-between;
  padding: 0 21px 0 19px;
  border: 2px solid #8a8886;
  border-radius: 4px;
  font-size: 30px;
  letter-spacing: -0.5px;
}

.select-chev {
  width: 30px;
  height: 18px;
}

.main-foot {
  height: 140px;
  flex: none;
  display: flex;
  align-items: flex-start;
  justify-content: flex-end;
  gap: 8px;
  padding: 50px 53px 0 0;
  border-top: 2px solid #e0e0e0;
  font-size: 30px;
  letter-spacing: -0.3px;
  color: #2f6fd0;
}

.foot-ico {
  width: 38px;
  height: 38px;
  color: #2f5fd8;
}

/* windows taskbar */
.taskbar {
  height: 144px;
  flex: none;
  display: flex;
  border-top: 3px solid #b5b3b5;
  background: linear-gradient(to right, #e6dcdc 0, #d8dde8 400px, #dcdde6 900px, #e3d9dc 1500px, #e3d9dd 2000px, #dbdce6 2500px, #dcdce4 3000px, #dadae2 3840px);
}

.task-left {
  width: 913px;
  flex: none;
}

.widget {
  width: 66px;
  margin: 61px 0 0 63px;
  position: relative;
}

.moon {
  width: 66px;
  height: 41px;
}

.widget-badge {
  position: absolute;
  left: 30px;
  top: -42px;
  width: 48px;
  height: 48px;
  border-radius: 50%;
  background-color: #c42b1c;
  color: #fff;
  font-size: 32px;
  line-height: 48px;
  text-align: center;
}

.task-apps {
  display: flex;
  width: 1983px;
  flex: none;
}

.app {
  width: 132.2px;
  height: 141px;
  display: flex;
  justify-content: center;
  padding-top: 35px;
  position: relative;
}

.app.on::after {
  content: "";
  position: absolute;
  left: 57px;
  top: 117px;
  width: 18px;
  height: 9px;
  border-radius: 5px;
  background-color: #7d7c80;
}

.app-ico {
  width: 72px;
  height: 72px;
}

.app-ico.narrow {
  width: 54px;
}

.team-t,
.task-letter {
  font-size: 30px;
  font-weight: 700;
  fill: #fff;
  text-anchor: middle;
}

.tray {
  flex: 1;
  display: flex;
  align-items: center;
  padding-bottom: 6px;
}

.tray-caret {
  width: 32px;
  height: 16px;
  margin-left: 204px;
}

.tray-sync {
  position: relative;
  margin-left: 56px;
}

.tray-ico {
  width: 48px;
  height: 48px;
}

.orange-dot {
  position: absolute;
  left: 24px;
  top: 24px;
  width: 24px;
  height: 24px;
  border-radius: 50%;
  background-color: #f59a00;
}

.tray-wifi {
  width: 48px;
  height: 34px;
  margin-left: 50px;
}

.tray-spk {
  width: 48px;
  height: 40px;
  margin-left: 20px;
}

.tray-bat {
  width: 48px;
  height: 40px;
  margin-left: 26px;
}

.clock {
  width: 200px;
  margin-left: 34px;
  display: flex;
  flex-direction: column;
  align-items: flex-end;
  gap: 6px;
  font-size: 34px;
  line-height: 42px;
  letter-spacing: 0.1px;
  color: #1a1a1a;
}

.tray-bell {
  width: 40px;
  height: 46px;
  margin-left: 32px;
}

.zz {
  font-size: 22px;
  font-weight: 700;
  fill: #fff;
  text-anchor: middle;
}

.zz.small {
  fill: #111;
  font-size: 18px;
}
```
